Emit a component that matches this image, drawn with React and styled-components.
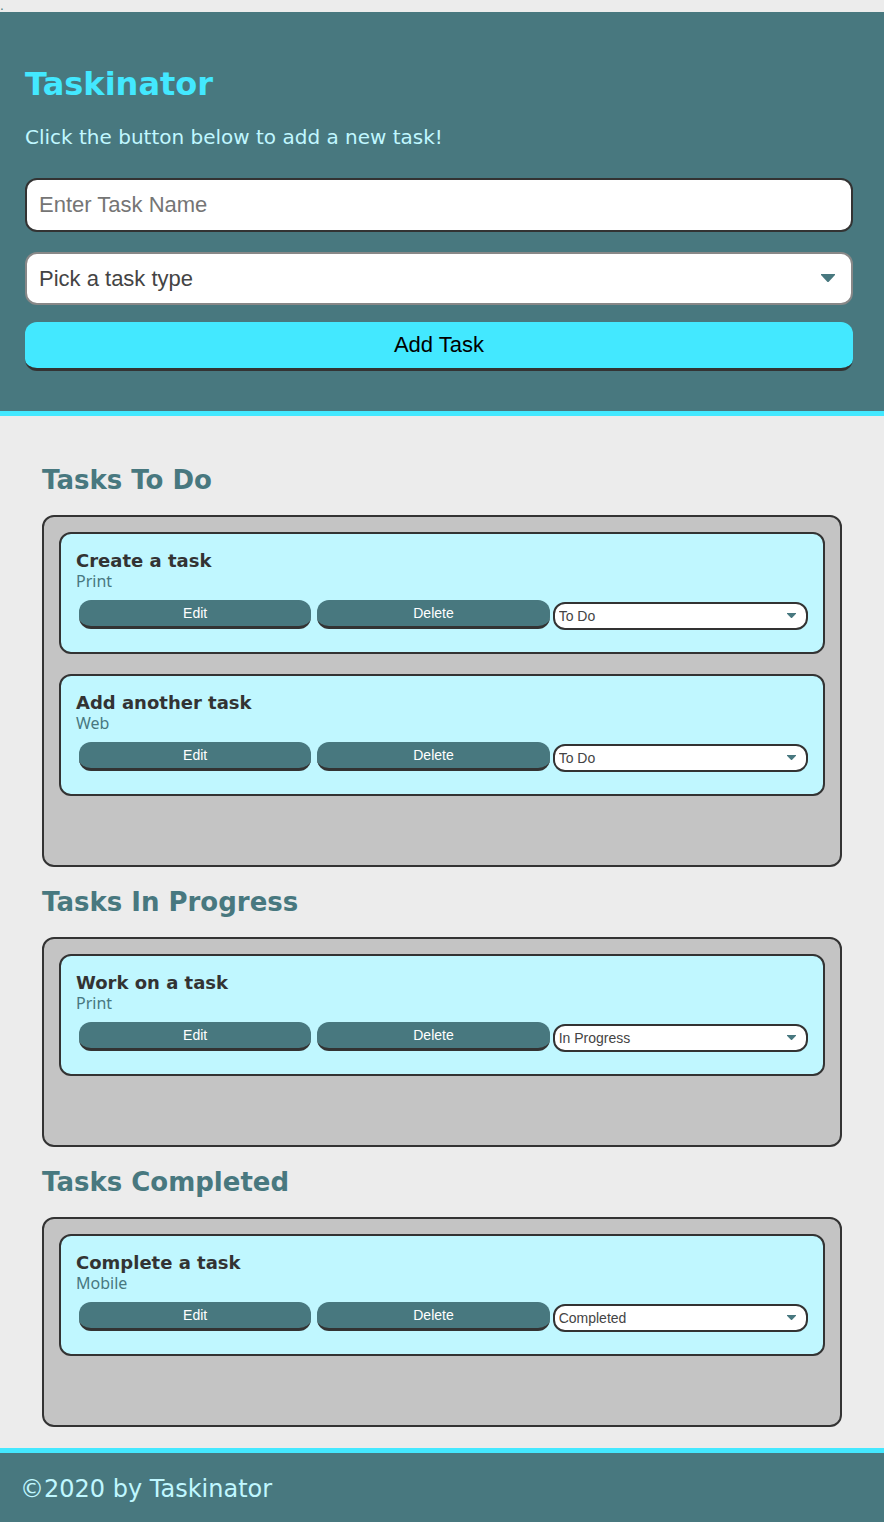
import React, { useState } from "react";
import styled, { createGlobalStyle } from "styled-components";

const GlobalStyle = createGlobalStyle`
  *, *::before, *::after { box-sizing: border-box; }
  body {
    margin: 0;
    background: #ececec;
    color: #48787f;
    font-family: "DejaVu Sans", Verdana, sans-serif;
  }
  h1, h2, h3, p, ul { margin: 0; padding: 0; }
`;

const controlFont = `"Liberation Sans", Arial, sans-serif`;

const TopStrip = styled.div`
  height: 12px;
  font-size: 12px;
  line-height: 12px;
`;

const Header = styled.header`
  background: #48787f;
  border-bottom: 5px solid #43e8ff;
  padding: 52px 31px 40px 25px;
`;

const Title = styled.h1`
  color: #43e8ff;
  font-size: 32px;
  line-height: 40px;
`;

const Intro = styled.p`
  margin-top: 20px;
  color: #c0f7ff;
  font-size: 20px;
  line-height: 26px;
`;

const TaskForm = styled.form`
  display: flex;
  flex-direction: column;
  margin-top: 28px;
`;

const NameInput = styled.input`
  width: 100%;
  height: 54px;
  padding: 0 12px;
  border: 2px solid #333;
  border-radius: 12px;
  background: #fff;
  color: #444;
  font: 22px ${controlFont};
  &::placeholder { color: #757575; }
`;

const SelectWrap = styled.div`
  position: relative;
  margin-top: ${(p) => (p.$small ? 2 : 20)}px;
`;

const Select = styled.select`
  display: block;
  width: 100%;
  height: ${(p) => (p.$small ? 28 : 53)}px;
  padding: ${(p) => (p.$small ? "0 24px 0 4px" : "0 40px 0 12px")};
  appearance: none;
  border: 2px solid ${(p) => (p.$small ? "#333" : "#888")};
  border-radius: 12px;
  background: #fff;
  color: #444;
  font: ${(p) => (p.$small ? 14 : 22)}px ${controlFont};
`;

const Arrow = styled.svg`
  position: absolute;
  top: ${(p) => (p.$small ? 11 : 22)}px;
  right: ${(p) => (p.$small ? 12 : 18)}px;
  width: ${(p) => (p.$small ? 9 : 14)}px;
  height: ${(p) => (p.$small ? 5 : 8)}px;
  fill: #48787f;
  pointer-events: none;
`;

const AddButton = styled.button`
  height: 49px;
  margin-top: 17px;
  padding: 0;
  border: 0;
  border-bottom: 3px solid #333;
  border-radius: 12px;
  background: #43e8ff;
  color: #000;
  font: 22px ${controlFont};
`;

const Main = styled.main`
  padding: 28px 42px 21px;
`;

const ListTitle = styled.h2`
  padding: 19px 0;
  font-size: 26px;
  line-height: 32px;
`;

const Lists = styled.div`
  padding-top: 1px;
`;

const Board = styled.ul`
  padding: 15px 15px 49px;
  border: 2px solid #333;
  border-radius: 12px;
  background: #c4c4c4;
  list-style: none;
`;

const Card = styled.li`
  margin-bottom: 20px;
  padding: 17px 15px 22px;
  border: 2px solid #333;
  border-radius: 12px;
  background: #c0f7ff;
`;

const TaskName = styled.h3`
  color: #333;
  font-size: 18px;
  line-height: 20px;
`;

const TaskType = styled.p`
  font-family: "Noto Sans", sans-serif;
  font-size: 16px;
  font-weight: 400;
  line-height: 20px;
`;

const Actions = styled.div`
  display: grid;
  grid-template-columns: 14fr 14fr 15fr;
  align-items: start;
  margin-top: 9px;
`;

const ActionButton = styled.button`
  height: 29px;
  margin: 0 3px;
  padding: 0;
  border: 0;
  border-bottom: 3px solid #333;
  border-radius: 12px;
  background: #48787f;
  color: #fff;
  font: 14px ${controlFont};
`;

const Footer = styled.footer`
  padding: 22px 20px 18px;
  border-top: 5px solid #43e8ff;
  background: #48787f;
  color: #c0f7ff;
  font-size: 24px;
  line-height: 29px;
`;

const statuses = ["To Do", "In Progress", "Completed"];
const types = ["Print", "Web", "Mobile"];

const lists = [
  {
    title: "Tasks To Do",
    status: "To Do",
    tasks: [
      { name: "Create a task", type: "Print" },
      { name: "Add another task", type: "Web" },
    ],
  },
  {
    title: "Tasks In Progress",
    status: "In Progress",
    tasks: [{ name: "Work on a task", type: "Print" }],
  },
  {
    title: "Tasks Completed",
    status: "Completed",
    tasks: [{ name: "Complete a task", type: "Mobile" }],
  },
];

function Dropdown({ small, label, value, onChange, children }) {
  return (
    <SelectWrap $small={small}>
      <Select $small={small} aria-label={label} value={value} onChange={onChange}>
        {children}
      </Select>
      <Arrow $small={small} viewBox="0 0 14 8" preserveAspectRatio="none" aria-hidden="true">
        <path d="M0 0H14V1L8 7.4Q7 8.4 6 7.4L0 1Z" />
      </Arrow>
    </SelectWrap>
  );
}

function Task({ name, type, initialStatus }) {
  const [status, setStatus] = useState(initialStatus);
  return (
    <Card>
      <TaskName>{name}</TaskName>
      <TaskType>{type}</TaskType>
      <Actions>
        <ActionButton type="button">Edit</ActionButton>
        <ActionButton type="button">Delete</ActionButton>
        <Dropdown
          small
          label={`Status of ${name}`}
          value={status}
          onChange={(e) => setStatus(e.target.value)}
        >
          {statuses.map((s) => (
            <option key={s}>{s}</option>
          ))}
        </Dropdown>
      </Actions>
    </Card>
  );
}

export default function App() {
  const [type, setType] = useState("");
  return (
    <>
      <GlobalStyle />
      <TopStrip>.</TopStrip>
      <Header>
        <Title>Taskinator</Title>
        <Intro>Click the button below to add a new task!</Intro>
        <TaskForm onSubmit={(e) => e.preventDefault()}>
          <NameInput type="text" aria-label="Task name" placeholder="Enter Task Name" />
          <Dropdown label="Task type" value={type} onChange={(e) => setType(e.target.value)}>
            <option value="" disabled>
              Pick a task type
            </option>
            {types.map((t) => (
              <option key={t}>{t}</option>
            ))}
          </Dropdown>
          <AddButton type="submit">Add Task</AddButton>
        </TaskForm>
      </Header>
      <Main>
        <Lists>
          {lists.map((list) => (
            <section key={list.title}>
              <ListTitle>{list.title}</ListTitle>
              <Board>
                {list.tasks.map((t) => (
                  <Task key={t.name} {...t} initialStatus={list.status} />
                ))}
              </Board>
            </section>
          ))}
        </Lists>
      </Main>
      <Footer>©2020 by Taskinator</Footer>
    </>
  );
}
